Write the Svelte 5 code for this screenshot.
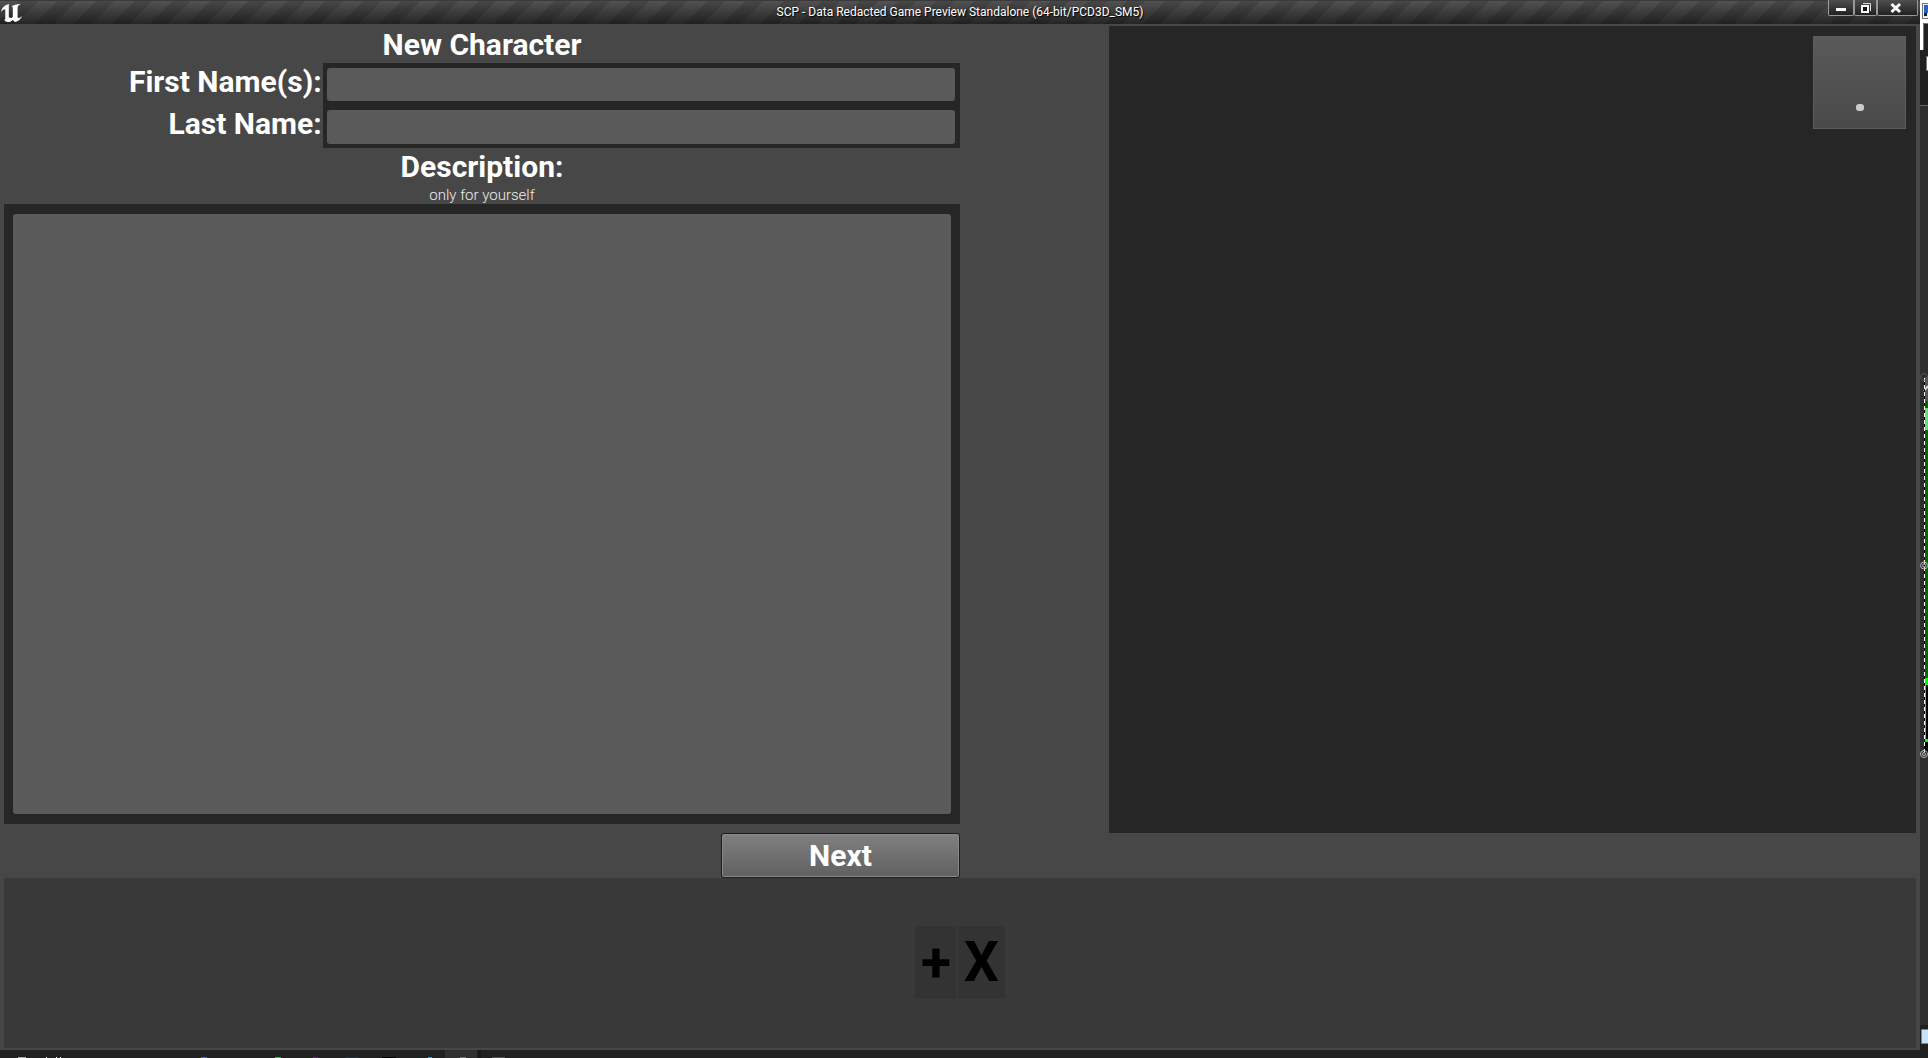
<script lang="ts">
  let firstName = $state('');
  let lastName = $state('');
  let description = $state('');
</script>

<div class="desktop">
  <div class="upper">
    <div class="window">
      <header class="titlebar">
        <svg class="logo" viewBox="0 0 24 22" aria-hidden="true">
          <path d="M1 11C1.800 6.500 4.500 4.200 9.500 3C8.600 4 8.800 4.800 8.800 6V16C9.800 17.300 11.500 17.300 12.800 16V7C12.800 5.700 12.200 5.500 11.300 5.500C13.500 4 16.500 3.600 21 2.800C18.500 4.200 17.600 5.300 17.600 7V15.800C17.600 17.600 19.500 17.500 22.500 14.800C20.500 18.800 17.800 20.600 14.800 21L12.800 19C11.300 20.500 9.500 21.300 7 21C5.500 20.700 4.800 19.800 4 18.800C5 18.900 5.300 18.400 5.300 17.400V9C5.300 7.500 3 8 1 11Z" fill="#fff" />
        </svg>
        <span class="caption">SCP - Data Redacted Game Preview Standalone (64-bit/PCD3D_SM5)</span>
        <div class="controls">
          <button class="ctl min" aria-label="Minimize">
            <svg width="12" height="12" viewBox="0 0 12 12"><rect x="1" y="6" width="10" height="3" fill="#fff" /></svg>
          </button>
          <button class="ctl restore" aria-label="Restore">
            <svg width="12" height="12" viewBox="0 0 12 12"><path d="M3 1.500H10.500V9" fill="none" stroke="#ddd" /><rect x="2" y="4" width="6" height="6" fill="#111" stroke="#fff" stroke-width="2" /></svg>
          </button>
          <button class="ctl close" aria-label="Close">
            <svg width="12" height="12" viewBox="0 0 12 12"><path d="M1.500 2L10 10M10 2L1.500 10" stroke="#fff" stroke-width="3" /></svg>
          </button>
        </div>
      </header>

      <main class="content">
        <div class="stage">
          <section class="form">
            <h1>New Character</h1>
            <div class="fields">
              <label for="first">First Name(s):</label>
              <div class="slot"><input id="first" type="text" bind:value={firstName} /></div>
              <label for="last">Last Name:</label>
              <div class="slot"><input id="last" type="text" bind:value={lastName} /></div>
            </div>
            <label class="heading" for="desc">Description:</label>
            <p class="note">only for yourself</p>
            <div class="editor"><textarea id="desc" bind:value={description}></textarea></div>
            <button class="next">Next</button>
          </section>
          <section class="preview">
            <button class="thumb" aria-label="Preview option"><span class="dot"></span></button>
          </section>
        </div>
        <footer class="roster">
          <button class="tile">+</button>
          <button class="tile">X</button>
        </footer>
      </main>
    </div>

    <svg class="behind" width="8" height="1050" viewBox="0 0 8 1050" aria-hidden="true">
      <rect width="8" height="105" fill="#202020" />
      <path d="M0 0H8V23H3V50H0Z" fill="#fff" />
      <path d="M3.500 50V23.500H8" fill="none" stroke="#777" />
      <rect x="2" y="3" width="6" height="16" fill="#777" />
      <rect x="3" y="4" width="5" height="14" fill="#eee" />
      <rect x="4" y="5" width="4" height="8" fill="#2a5fc4" />
      <rect x="4" y="13" width="3" height="3" fill="#123" />
      <rect x="6" y="56" width="2" height="15" fill="#777" />
      <rect x="7" y="57" width="1" height="13" fill="#fff" />
      <rect y="105" width="8" height="1" fill="#666" />
      <rect x="5" y="377" width="3" height="24" fill="#555" />
      <path d="M4 391L8 386" stroke="#ddd" stroke-width="2" />
      <rect x="5" y="401" width="3" height="284" fill="#006a00" />
      <rect x="5" y="408" width="3" height="22" fill="#5fe070" />
      <rect x="5" y="678" width="3" height="7" fill="#0f0" />
      <rect x="5" y="685" width="3" height="69" fill="#000" />
      <rect x="5" y="685" width="1" height="56" fill="#0f0" />
      <rect x="5" y="739" width="3" height="3" fill="#0f0" />
      <path d="M4.500 378V753" stroke="#000" />
      <path d="M4.500 378V753" stroke="#fff" stroke-dasharray="4 3" />
      <g fill="none" stroke="#bbb">
        <circle cx="4" cy="377" r="3.500" stroke="#555" />
        <circle cx="4" cy="565.500" r="3.500" /><circle cx="4" cy="565.500" r="1.500" />
        <circle cx="4" cy="754" r="3.500" /><circle cx="4" cy="754" r="1.500" />
      </g>
      <rect y="1025" width="8" height="25" fill="#202020" />
      <rect x="1.500" y="1029.500" width="8" height="14" fill="#c5e3fb" stroke="#888" stroke-dasharray="1 1" />
    </svg>
  </div>

  <svg class="taskbar" height="8" width="600" viewBox="0 0 600 8" aria-hidden="true">
    <rect x="445" width="32" height="8" fill="#303030" />
    <rect x="478" width="3" height="8" fill="#191919" />
    <rect x="18" y="7" width="8" height="1" fill="#aaa" />
    <path d="M46 7.500H47M56 7.500H57M60 7.500H61" stroke="#fff" />
    <rect x="201" y="7" width="6" height="1" fill="#5560d0" />
    <rect x="275" y="7" width="6" height="1" fill="#30b868" />
    <rect x="313" y="7" width="5" height="1" fill="#573063" />
    <rect x="346" y="7" width="12" height="1" fill="#2a3338" />
    <rect x="382" y="7" width="14" height="1" fill="#000" />
    <rect x="428" y="7" width="4" height="1" fill="#38a0c8" />
    <rect x="460" y="7" width="6" height="1" fill="#777" />
    <rect x="492" y="7" width="13" height="1" fill="#555" />
  </svg>
</div>

<style>
  :global(body) {
    margin: 0;
    background: #212121;
  }
  .desktop {
    display: flex;
    flex-direction: column;
    height: 100vh;
    overflow: hidden;
    font-family: Roboto, sans-serif;
    color: #fff;
  }
  .desktop *,
  .desktop {
    box-sizing: border-box;
  }
  button {
    font-family: inherit;
    padding: 0;
  }
  .upper {
    flex: 1;
    min-height: 0;
    display: flex;
  }
  .window {
    flex: 1;
    display: flex;
    flex-direction: column;
    background: #474747;
  }
  .titlebar {
    height: 24px;
    display: grid;
    grid-template-columns: 1fr auto 1fr;
    background:
      linear-gradient(rgba(0, 0, 0, 0), rgba(0, 0, 0, 0.55)),
      repeating-linear-gradient(135deg, #525252 0 14px, #474747 14px 27px);
    border-top: 1px solid #3a3a3a;
  }
  .logo {
    width: 24px;
    height: 22px;
  }
  .caption {
    font-size: 12px;
    line-height: 23px;
    text-shadow: 1px 1px 1px #000;
  }
  .controls {
    display: flex;
    justify-content: flex-end;
    padding-right: 2px;
    height: 16px;
    margin-top: -1px;
  }
  .ctl {
    display: flex;
    align-items: center;
    justify-content: center;
    border: 1px solid #999;
    border-top: 0;
    border-radius: 0 0 2px 2px;
    background: linear-gradient(#4e4e4e, #222);
  }
  .min {
    width: 26px;
  }
  .restore {
    width: 23px;
  }
  .close {
    width: 41px;
    padding-right: 3px;
  }
  .content {
    flex: 1;
    min-height: 0;
    display: flex;
    flex-direction: column;
    padding: 2px 4px;
  }
  .stage {
    flex: 5 1 0;
    min-height: 0;
    display: flex;
    justify-content: space-between;
  }
  .form {
    width: 50%;
    display: flex;
    flex-direction: column;
  }
  h1,
  label {
    margin: 0;
    font-size: 30px;
    line-height: 38px;
    font-weight: 700;
  }
  h1,
  .heading,
  .note {
    text-align: center;
  }
  h1,
  .heading {
    height: 37px;
  }
  .fields {
    display: grid;
    grid-template-columns: 1fr 2fr;
    grid-template-rows: 42px 43px;
    text-align: right;
  }
  .fields label {
    padding-right: 1px;
  }
  .slot {
    display: flex;
    padding: 5px 5px 4px 4px;
    background: #262626;
  }
  input,
  textarea {
    flex: 1;
    min-width: 0;
    margin: 0;
    padding: 4px 6px;
    border: 0;
    border-radius: 3px;
    background: #5a5a5a;
    color: #fff;
    font: 400 20px Roboto, sans-serif;
    resize: none;
  }
  .note {
    margin: 0;
    height: 19px;
    font-size: 15px;
    line-height: 21px;
    font-weight: 300;
    color: #eee;
  }
  .editor {
    flex: 1;
    display: flex;
    padding: 10px 9px;
    background: #262626;
    margin-bottom: 9px;
  }
  .next {
    align-self: flex-end;
    width: 25%;
    height: 45px;
    border: 1px solid #1c1c1c;
    border-radius: 3px;
    background: linear-gradient(#808080, #606060);
    box-shadow: inset 0 0 0 1px #8a8a8a;
    color: #fff;
    font-size: 30px;
    font-weight: 700;
  }
  .preview {
    display: flex;
    justify-content: flex-end;
    align-items: flex-start;
    margin-bottom: 45px;
    padding: 10px;
    aspect-ratio: 1;
    background: #262626;
  }
  .thumb {
    display: flex;
    justify-content: center;
    width: 93px;
    height: 93px;
    padding-top: 67px;
    border: 1px solid #5c5c5c;
    background: linear-gradient(#5a5a5a, #4a4a4a);
  }
  .dot {
    width: 8px;
    height: 7px;
    border-radius: 3px;
    background: #ccc;
  }
  .roster {
    flex: 1 1 0;
    display: flex;
    align-items: center;
    justify-content: center;
    gap: 1px;
    background: #393939;
  }
  .tile {
    height: 73px;
    padding: 0 5px 1px;
    border: 1px solid #353535;
    background: #333;
    color: #000;
    font-size: 55px;
    font-weight: 700;
    line-height: 64px;
  }
  .behind {
    flex: none;
    background: #2e2e2e;
  }
  .taskbar {
    flex: none;
  }
</style>
